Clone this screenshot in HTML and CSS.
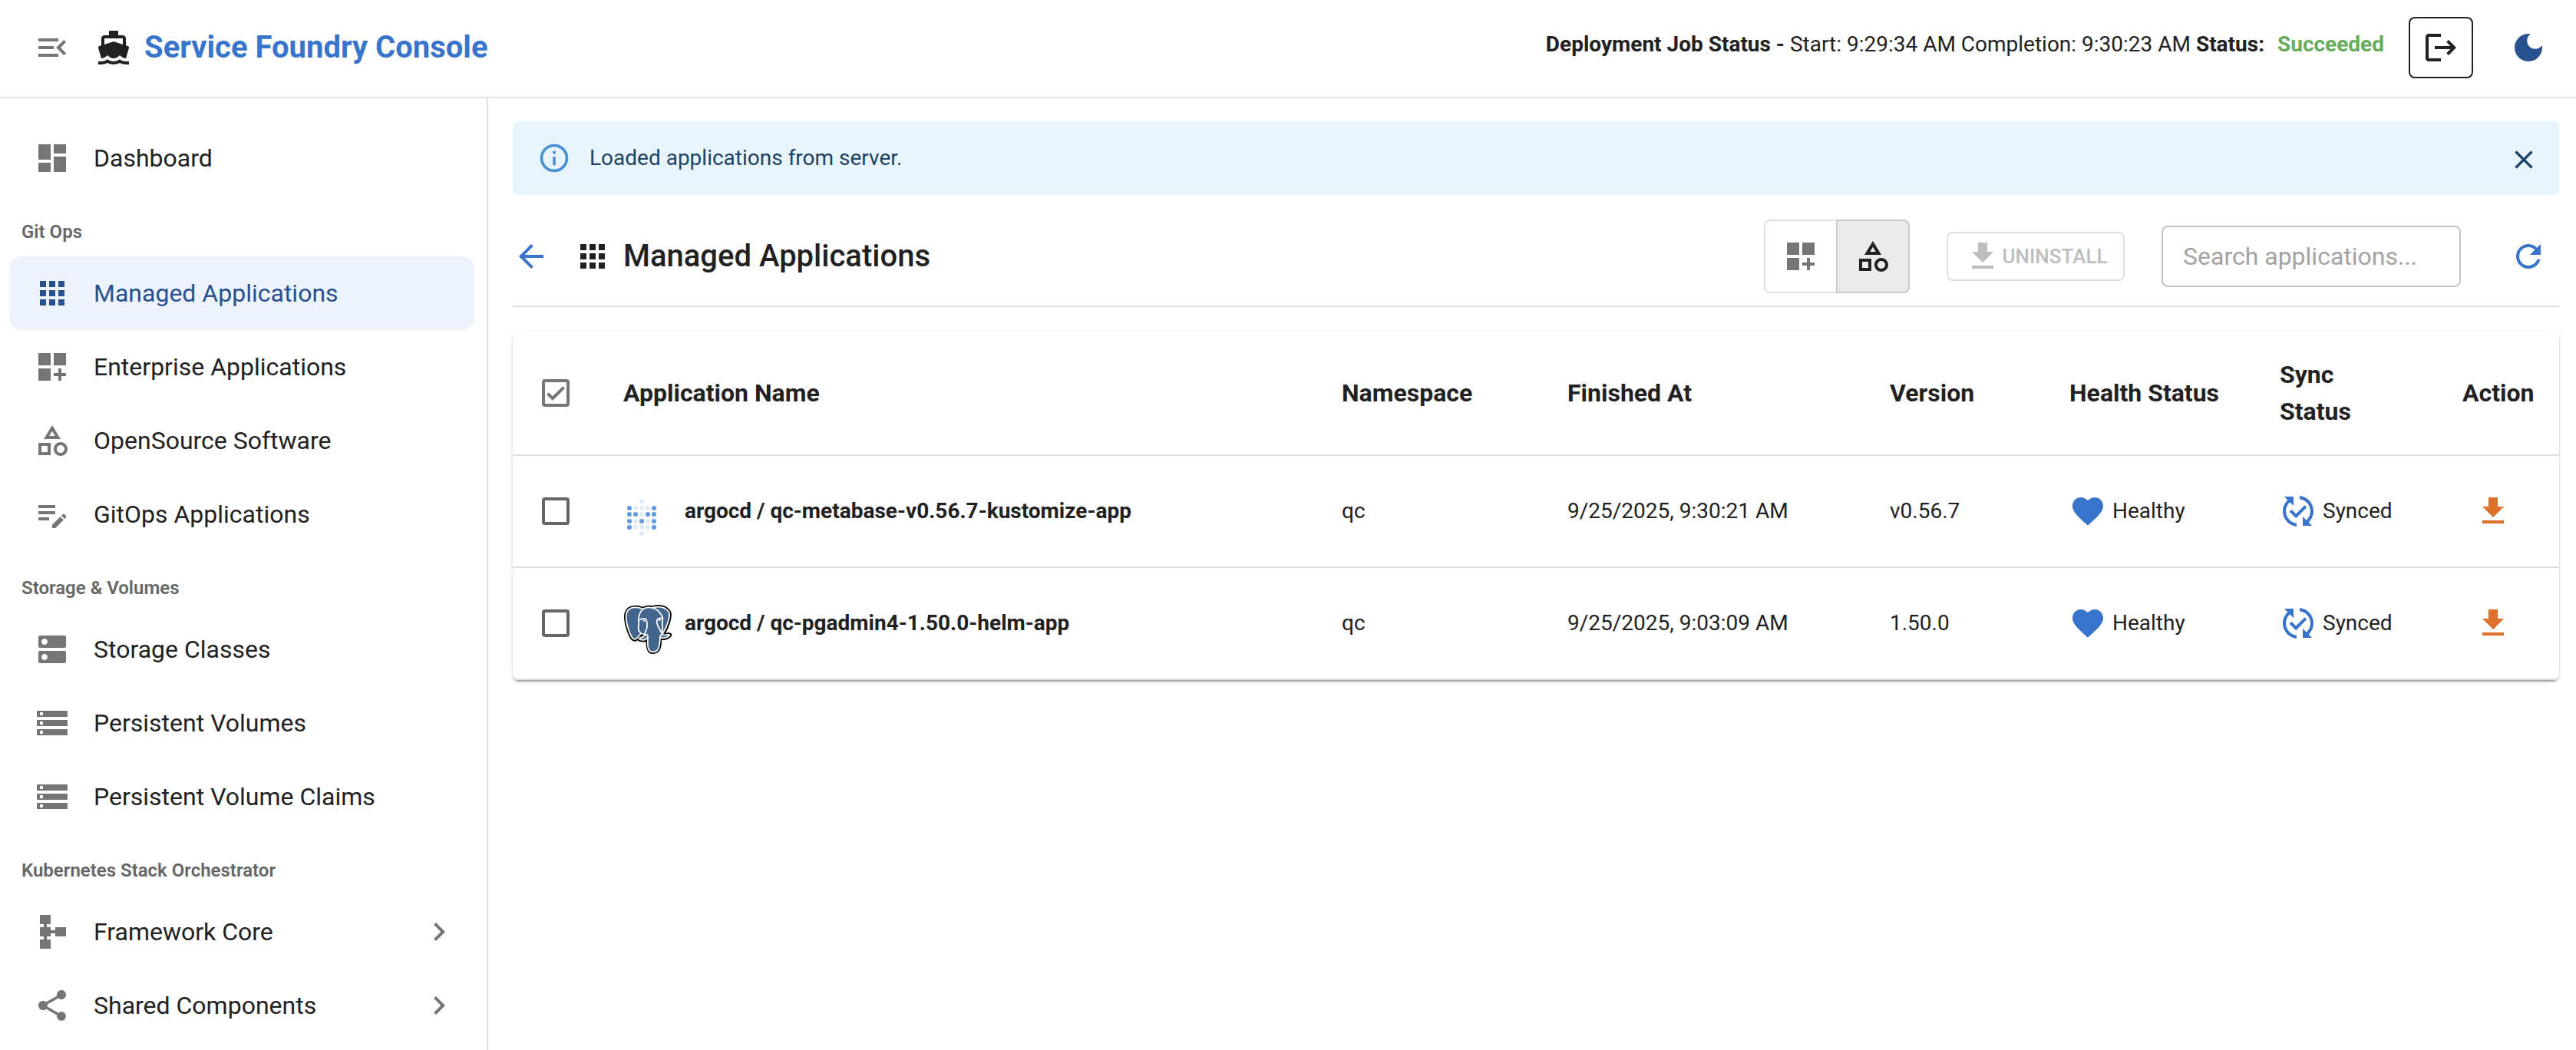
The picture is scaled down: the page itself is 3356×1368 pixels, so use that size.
FILE: index.html
```html
<!DOCTYPE html>
<html lang="en">
<head>
<meta charset="utf-8">
<title>Service Foundry Console</title>
<link rel="stylesheet" href="styles.css">
</head>
<body>
<svg class="sprite" aria-hidden="true">
  <symbol id="menu-open" viewBox="0 0 24 24"><path d="M3 18h13v-2H3v2zm0-5h10v-2H3v2zm0-7v2h13V6H3zm18 9.59L17.42 12 21 8.41 19.59 7l-5 5 5 5L21 15.59z"/></symbol>
  <symbol id="boat" viewBox="0 0 24 24"><path d="M20 21c-1.39 0-2.78-.47-4-1.32-2.44 1.71-5.56 1.71-8 0C6.78 20.53 5.39 21 4 21H2v2h2c1.38 0 2.74-.35 4-.99 2.52 1.29 5.48 1.29 8 0 1.26.65 2.62.99 4 .99h2v-2h-2zM3.95 19H4c1.6 0 3.02-.88 4-2 .98 1.12 2.4 2 4 2s3.02-.88 4-2c.98 1.12 2.4 2 4 2h.05l1.89-6.68c.08-.26.06-.54-.06-.78s-.34-.42-.6-.5L20 10.62V6c0-1.1-.9-2-2-2h-3V1H9v3H6c-1.1 0-2 .9-2 2v4.62l-1.29.42c-.26.08-.48.26-.6.5s-.15.52-.06.78L3.95 19zM6 6h12v3.97L12 8 6 9.97V6z"/></symbol>
  <symbol id="logout" viewBox="0 0 24 24"><path d="m17 7-1.41 1.41L18.17 11H8v2h10.17l-2.58 2.58L17 17l5-5zM4 5h8V3H4c-1.1 0-2 .9-2 2v14c0 1.1.9 2 2 2h8v-2H4V5z"/></symbol>
  <symbol id="moon" viewBox="0 0 24 24"><path d="M12 3c-4.97 0-9 4.03-9 9s4.03 9 9 9 9-4.03 9-9c0-.46-.04-.92-.1-1.36-.98 1.37-2.58 2.26-4.4 2.26-2.98 0-5.4-2.42-5.4-5.4 0-1.81.89-3.42 2.26-4.4-.44-.06-.9-.1-1.36-.1z"/></symbol>
  <symbol id="dashboard" viewBox="0 0 24 24"><path d="M3 13h8V3H3v10zm0 8h8v-6H3v6zm10 0h8V11h-8v10zm0-18v6h8V3h-8z"/></symbol>
  <symbol id="apps" viewBox="0 0 24 24"><path d="M4 8h4V4H4v4zm6 12h4v-4h-4v4zm-6 0h4v-4H4v4zm0-6h4v-4H4v4zm6 0h4v-4h-4v4zm6-10v4h4V4h-4zm-6 4h4V4h-4v4zm6 6h4v-4h-4v4zm0 6h4v-4h-4v4z"/></symbol>
  <symbol id="customize" viewBox="0 0 24 24"><path d="M3 3h8v8H3zm10 0h8v8h-8zM3 13h8v8H3zm15 0h-2v3h-3v2h3v3h2v-3h3v-2h-3z"/></symbol>
  <symbol id="category" viewBox="0 0 24 24"><path d="m12 2-5.5 9h11L12 2zm0 3.84L13.93 9h-3.87L12 5.84zM17.5 13c-2.49 0-4.5 2.01-4.5 4.5s2.01 4.5 4.5 4.5 4.5-2.01 4.5-4.5-2.01-4.5-4.5-4.5zm0 7c-1.38 0-2.5-1.12-2.5-2.5s1.12-2.5 2.5-2.5 2.5 1.12 2.5 2.5-1.12 2.5-2.5 2.5zM3 21.5h8v-8H3v8zm2-6h4v4H5v-4z"/></symbol>
  <symbol id="edit-note" viewBox="0 0 24 24"><path d="M3 10h11v2H3v-2zm0-2h11V6H3v2zm0 8h7v-2H3v2zm15.01-3.13.71-.71c.39-.39 1.02-.39 1.41 0l.71.71c.39.39.39 1.02 0 1.41l-.71.71-2.12-2.12zm-.71.71-5.3 5.3V21h2.12l5.3-5.3-2.12-2.12z"/></symbol>
  <symbol id="dns" viewBox="0 0 24 24"><path d="M20 13H4c-.55 0-1 .45-1 1v6c0 .55.45 1 1 1h16c.55 0 1-.45 1-1v-6c0-.55-.45-1-1-1zM7 19c-1.1 0-2-.9-2-2s.9-2 2-2 2 .9 2 2-.9 2-2 2zM20 3H4c-.55 0-1 .45-1 1v6c0 .55.45 1 1 1h16c.55 0 1-.45 1-1V4c0-.55-.45-1-1-1zM7 9c-1.1 0-2-.9-2-2s.9-2 2-2 2 .9 2 2-.9 2-2 2z"/></symbol>
  <symbol id="storage" viewBox="0 0 24 24"><path d="M2 20h20v-4H2v4zm2-3h2v2H4v-2zM2 4v4h20V4H2zm4 3H4V5h2v2zm-4 7h20v-4H2v4zm2-3h2v2H4v-2z"/></symbol>
  <symbol id="schema" viewBox="0 0 24 24"><path d="M14 9v2h-3V9H8.5V7H11V1H4v6h2.5v2H4v6h2.5v2H4v6h7v-6H8.5v-2H11v-2h3v2h7V9h-7z"/></symbol>
  <symbol id="share" viewBox="0 0 24 24"><path d="M18 16.08c-.76 0-1.44.3-1.96.77L8.91 12.7c.05-.23.09-.46.09-.7s-.04-.47-.09-.7l7.05-4.11c.54.5 1.25.81 2.04.81 1.66 0 3-1.34 3-3s-1.34-3-3-3-3 1.34-3 3c0 .24.04.47.09.7L8.04 9.81C7.5 9.31 6.79 9 6 9c-1.66 0-3 1.34-3 3s1.34 3 3 3c.79 0 1.5-.31 2.04-.81l7.12 4.16c-.05.21-.08.43-.08.65 0 1.61 1.31 2.92 2.92 2.92s2.92-1.31 2.92-2.92-1.31-2.92-2.92-2.92z"/></symbol>
  <symbol id="chevron" viewBox="0 0 24 24"><path d="M10 6 8.59 7.41 13.17 12l-4.58 4.59L10 18l6-6z"/></symbol>
  <symbol id="info" viewBox="0 0 24 24"><path d="M11 9h2V7h-2M12 20c-4.41 0-8-3.59-8-8s3.59-8 8-8 8 3.59 8 8-3.59 8-8 8m0-18A10 10 0 0 0 2 12a10 10 0 0 0 10 10 10 10 0 0 0 10-10A10 10 0 0 0 12 2m-1 15h2v-6h-2v6z"/></symbol>
  <symbol id="close" viewBox="0 0 24 24"><path d="M19 6.41 17.59 5 12 10.59 6.41 5 5 6.41 10.59 12 5 17.59 6.41 19 12 13.41 17.59 19 19 17.59 13.41 12z"/></symbol>
  <symbol id="back" viewBox="0 0 24 24"><path d="M20 11H7.83l5.59-5.59L12 4l-8 8 8 8 1.41-1.41L7.83 13H20v-2z"/></symbol>
  <symbol id="download" viewBox="0 0 24 24"><path d="M19 9h-4V3H9v6H5l7 7 7-7zM5 18v2h14v-2H5z"/></symbol>
  <symbol id="refresh" viewBox="0 0 24 24"><path d="M17.65 6.35C16.2 4.9 14.21 4 12 4c-4.42 0-7.99 3.58-7.99 8s3.57 8 7.99 8c3.73 0 6.84-2.55 7.73-6h-2.08c-.82 2.33-3.04 4-5.65 4-3.31 0-6-2.69-6-6s2.69-6 6-6c1.66 0 3.14.69 4.22 1.78L13 11h7V4l-2.35 2.35z"/></symbol>
  <symbol id="heart" viewBox="0 0 24 24"><path d="m12 21.35-1.45-1.32C5.4 15.36 2 12.28 2 8.5 2 5.42 4.42 3 7.5 3c1.74 0 3.41.81 4.5 2.09C13.09 3.81 14.76 3 16.5 3 19.58 3 22 5.42 22 8.5c0 3.78-3.4 6.86-8.55 11.54L12 21.35z"/></symbol>
  <symbol id="synced" viewBox="0 0 24 24"><path d="m17.66 9.53-7.07 7.07-4.24-4.24 1.41-1.41 2.83 2.83 5.66-5.66 1.41 1.41zM4 12c0-2.33 1.02-4.42 2.62-5.88L9 8.5v-6H3l2.2 2.2C3.24 6.52 2 9.11 2 12c0 5.19 3.95 9.45 9 9.95v-2.02c-3.94-.49-7-3.86-7-7.93zm18 0c0-5.19-3.95-9.45-9-9.95v2.02c3.94.49 7 3.86 7 7.93 0 2.33-1.02 4.42-2.62 5.88L15 15.5v6h6l-2.2-2.2c1.96-1.82 3.2-4.41 3.2-7.3z"/></symbol>
</svg>

<header class="topbar">
  <button class="icon-button menu-button" type="button" aria-label="Collapse menu"><svg class="icon"><use href="#menu-open"/></svg></button>
  <a class="brand" href="#"><svg class="icon brand-icon"><use href="#boat"/></svg>Service Foundry Console</a>
  <p class="job-status"><strong>Deployment Job Status - </strong>Start: 9:29:34 AM Completion: 9:30:23 AM <strong>Status: </strong><strong class="job-result">Succeeded</strong></p>
  <button class="logout-button" type="button" aria-label="Log out"><svg class="icon"><use href="#logout"/></svg></button>
  <button class="icon-button theme-button" type="button" aria-label="Dark mode"><svg class="icon"><use href="#moon"/></svg></button>
</header>

<div class="layout">
  <nav class="sidebar" aria-label="Main">
    <a class="nav-item" href="#"><svg class="icon"><use href="#dashboard"/></svg><span class="nav-text">Dashboard</span></a>
    <h2 class="nav-heading">Git Ops</h2>
    <a class="nav-item active" href="#" aria-current="page"><svg class="icon"><use href="#apps"/></svg><span class="nav-text">Managed Applications</span></a>
    <a class="nav-item" href="#"><svg class="icon"><use href="#customize"/></svg><span class="nav-text">Enterprise Applications</span></a>
    <a class="nav-item" href="#"><svg class="icon"><use href="#category"/></svg><span class="nav-text">OpenSource Software</span></a>
    <a class="nav-item" href="#"><svg class="icon"><use href="#edit-note"/></svg><span class="nav-text">GitOps Applications</span></a>
    <h2 class="nav-heading">Storage &amp; Volumes</h2>
    <a class="nav-item" href="#"><svg class="icon"><use href="#dns"/></svg><span class="nav-text">Storage Classes</span></a>
    <a class="nav-item" href="#"><svg class="icon"><use href="#storage"/></svg><span class="nav-text">Persistent Volumes</span></a>
    <a class="nav-item" href="#"><svg class="icon"><use href="#storage"/></svg><span class="nav-text">Persistent Volume Claims</span></a>
    <h2 class="nav-heading">Kubernetes Stack Orchestrator</h2>
    <a class="nav-item" href="#"><svg class="icon"><use href="#schema"/></svg><span class="nav-text">Framework Core</span><svg class="icon"><use href="#chevron"/></svg></a>
    <a class="nav-item" href="#"><svg class="icon"><use href="#share"/></svg><span class="nav-text">Shared Components</span><svg class="icon"><use href="#chevron"/></svg></a>
  </nav>

  <main class="content">
    <div class="alert" role="status">
      <svg class="icon alert-icon"><use href="#info"/></svg>
      <p class="alert-text">Loaded applications from server.</p>
      <button class="alert-close" type="button" aria-label="Close"><svg class="icon close-icon"><use href="#close"/></svg></button>
    </div>

    <div class="toolbar">
      <a class="back-link" href="#" aria-label="Back"><svg class="icon"><use href="#back"/></svg></a>
      <svg class="icon"><use href="#apps"/></svg>
      <h1 class="page-title">Managed Applications</h1>
      <div class="toolbar-actions">
        <div class="toggle-group" role="group" aria-label="Application type">
          <button class="toggle" type="button" aria-pressed="false" aria-label="Enterprise"><svg class="icon"><use href="#customize"/></svg></button>
          <button class="toggle selected" type="button" aria-pressed="true" aria-label="Open source"><svg class="icon"><use href="#category"/></svg></button>
        </div>
        <button class="uninstall-button" type="button" disabled><svg class="icon"><use href="#download"/></svg>UNINSTALL</button>
        <input class="search" type="text" placeholder="Search applications..." aria-label="Search applications">
        <button class="icon-button refresh-button" type="button" aria-label="Refresh"><svg class="icon"><use href="#refresh"/></svg></button>
      </div>
    </div>

    <div class="card">
      <table class="apps-table">
        <colgroup>
          <col class="col-check"><col><col class="col-namespace"><col class="col-finished"><col class="col-version"><col class="col-health"><col class="col-sync"><col class="col-action">
        </colgroup>
        <thead>
          <tr>
            <th class="check-cell"><input class="checkbox check-all" type="checkbox" checked aria-label="Select all"></th>
            <th scope="col">Application Name</th>
            <th scope="col">Namespace</th>
            <th scope="col">Finished At</th>
            <th scope="col">Version</th>
            <th scope="col">Health Status</th>
            <th scope="col">Sync<br>Status</th>
            <th scope="col">Action</th>
          </tr>
        </thead>
        <tbody>
          <tr>
            <td class="check-cell"><input class="checkbox" type="checkbox" aria-label="Select qc-metabase"></td>
            <td>
              <div class="app-name">
                <svg class="app-logo" viewBox="0 0 64 64" aria-hidden="true">
                  <g fill="#e0ebf9"><circle cx="24" cy="11" r="3"/><circle cx="16" cy="20" r="3"/><circle cx="24" cy="20" r="3"/><circle cx="32" cy="20" r="3"/><circle cx="24" cy="28" r="3"/><circle cx="16" cy="37" r="3"/><circle cx="32" cy="37" r="3"/><circle cx="16" cy="45" r="3"/><circle cx="24" cy="45" r="3"/><circle cx="32" cy="45" r="3"/><circle cx="24" cy="53" r="3"/></g>
                  <g fill="#629ae0"><circle cx="8" cy="20" r="3"/><circle cx="40" cy="20" r="3"/><circle cx="8" cy="28" r="3"/><circle cx="16" cy="28" r="3"/><circle cx="32" cy="28" r="3"/><circle cx="40" cy="28" r="3"/><circle cx="8" cy="37" r="3"/><circle cx="24" cy="37" r="3"/><circle cx="40" cy="37" r="3"/><circle cx="8" cy="45" r="3"/><circle cx="40" cy="45" r="3"/></g>
                </svg>
                <strong>argocd / qc-metabase-v0.56.7-kustomize-app</strong>
              </div>
            </td>
            <td>qc</td>
            <td>9/25/2025, 9:30:21 AM</td>
            <td>v0.56.7</td>
            <td><span class="state"><svg class="icon"><use href="#heart"/></svg>Healthy</span></td>
            <td><span class="state"><svg class="icon"><use href="#synced"/></svg>Synced</span></td>
            <td><button class="icon-button row-action" type="button" aria-label="Uninstall qc-metabase"><svg class="icon"><use href="#download"/></svg></button></td>
          </tr>
          <tr>
            <td class="check-cell"><input class="checkbox" type="checkbox" aria-label="Select qc-pgadmin4"></td>
            <td>
              <div class="app-name">
                <svg class="app-logo" viewBox="0 0 432.071 445.383" aria-hidden="true">
                  <path fill="#000" stroke="#000" stroke-width="37.4" d="M323.205,324.227c2.833-23.601,1.984-27.062,19.563-23.239l4.463,0.392c13.517,0.615,31.199-2.174,41.587-7c22.362-10.376,35.622-27.7,13.572-23.148c-50.297,10.376-53.755-6.655-53.755-6.655c53.111-78.803,75.313-178.836,56.149-203.322C352.514-5.534,262.036,26.049,260.522,26.869l-0.482,0.089c-9.938-2.062-21.06-3.294-33.554-3.496c-22.761-0.374-40.032,5.967-53.133,15.904c0,0-161.408-66.498-153.899,83.628c1.597,31.936,45.777,241.655,98.47,178.31c19.259-23.163,37.871-42.748,37.871-42.748c9.242,6.14,20.307,9.272,31.912,8.147l0.897-0.765c-0.281,2.876-0.157,5.689,0.359,9.019c-13.572,15.167-9.584,17.83-36.723,23.416c-27.457,5.659-11.326,15.734-0.797,18.367c12.768,3.193,42.305,7.716,62.268-20.224l-0.795,3.188c5.325,4.26,4.965,30.619,5.72,49.452c0.756,18.834,2.017,36.409,5.856,46.771c3.839,10.36,8.369,37.05,44.036,29.406c29.809-6.388,52.6-15.582,54.677-101.107"/>
                  <path fill="#41658c" d="M402.395,271.23c-50.302,10.376-53.76-6.655-53.76-6.655c53.111-78.808,75.313-178.843,56.153-203.326c-52.27-66.785-142.752-35.2-144.262-34.38l-0.486,0.087c-9.938-2.063-21.06-3.292-33.56-3.496c-22.761-0.373-40.026,5.967-53.127,15.902c0,0-161.411-66.495-153.904,83.63c1.597,31.938,45.776,241.657,98.471,178.312c19.26-23.163,37.869-42.748,37.869-42.748c9.243,6.14,20.308,9.272,31.908,8.147l0.901-0.765c-0.28,2.876-0.152,5.689,0.361,9.019c-13.575,15.167-9.586,17.83-36.723,23.416c-27.459,5.659-11.328,15.734-0.796,18.367c12.768,3.193,42.307,7.716,62.266-20.224l-0.796,3.188c5.319,4.26,9.054,27.711,8.428,48.969c-0.626,21.259-1.044,35.854,3.147,47.254c4.191,11.4,8.368,37.05,44.042,29.406c29.809-6.388,45.256-22.942,47.405-50.555c1.525-19.631,4.976-16.729,5.194-34.28l2.768-8.309c3.192-26.611,0.507-35.196,18.872-31.203l4.463,0.392c13.517,0.615,31.208-2.174,41.591-7c22.358-10.376,35.618-27.7,13.573-23.148z"/>
                  <g fill="none" stroke="#fff" stroke-width="12.465" stroke-linecap="round" stroke-linejoin="round">
                    <path d="M215.866,286.484c-1.385,49.516,0.348,99.377,5.193,111.495c4.848,12.118,15.223,35.688,50.9,28.045c29.806-6.39,40.651-18.756,45.357-46.051c3.466-20.082,10.148-75.854,11.005-87.281"/>
                    <path d="M173.104,38.256c0,0-161.521-66.016-154.012,84.109c1.597,31.938,45.779,241.664,98.473,178.316c19.256-23.166,36.671-41.335,36.671-41.335"/>
                    <path d="M260.349,26.207c-5.591,1.753,89.848-34.889,144.087,34.417c19.159,24.484-3.043,124.519-56.153,203.329"/>
                    <path d="M348.282,263.953c0,0,3.461,17.036,53.764,6.653c22.04-4.552,8.776,12.774-13.577,23.155c-18.345,8.514-59.474,10.696-60.146-1.069c-1.729-30.355,21.647-21.133,19.96-28.739c-1.525-6.85-11.979-13.573-18.894-30.338c-6.037-14.633-82.796-126.849,21.287-110.183c3.813-0.789-27.146-99.002-124.553-100.599c-97.385-1.597-94.19,119.762-94.19,119.762"/>
                    <path d="M188.604,274.334c-13.577,15.166-9.584,17.829-36.723,23.417c-27.459,5.66-11.326,15.733-0.797,18.365c12.768,3.195,42.307,7.718,62.266-20.229c6.078-8.509-0.036-22.086-8.385-25.547c-4.034-1.671-9.428-3.765-16.361,3.994z"/>
                    <path d="M187.715,274.069c-1.368-8.917,2.93-19.528,7.536-31.942c6.922-18.626,22.893-37.255,10.117-96.339c-9.523-44.029-73.396-9.163-73.436-3.193c-0.039,5.968,2.889,30.26-1.067,58.548c-5.162,36.913,23.488,68.132,56.479,64.938"/>
                    <path d="M350.676,123.432c0.863,15.994-3.445,26.888-3.988,43.914c-0.804,24.748,11.799,53.074-7.191,81.435"/>
                  </g>
                  <g fill="#fff" stroke="#fff" stroke-width="4">
                    <path d="M172.517,141.7c-0.288,2.039,3.733,7.48,8.976,8.207c5.234,0.73,9.714-3.522,9.998-5.559c0.284-2.039-3.732-4.285-8.977-5.015c-5.237-0.731-9.719,0.333-9.996,2.367z"/>
                    <path d="M331.941,137.543c0.284,2.039-3.732,7.48-8.976,8.207c-5.238,0.73-9.718-3.522-10.005-5.559c-0.277-2.039,3.74-4.285,8.979-5.015c5.239-0.73,9.718,0.333,10.002,2.368z"/>
                  </g>
                </svg>
                <strong>argocd / qc-pgadmin4-1.50.0-helm-app</strong>
              </div>
            </td>
            <td>qc</td>
            <td>9/25/2025, 9:03:09 AM</td>
            <td>1.50.0</td>
            <td><span class="state"><svg class="icon"><use href="#heart"/></svg>Healthy</span></td>
            <td><span class="state"><svg class="icon"><use href="#synced"/></svg>Synced</span></td>
            <td><button class="icon-button row-action" type="button" aria-label="Uninstall qc-pgadmin4"><svg class="icon"><use href="#download"/></svg></button></td>
          </tr>
        </tbody>
      </table>
    </div>
  </main>
</div>
</body>
</html>
```
FILE: styles.css
```css
:root {
  --primary: #3874cb;
  --primary-dark: #27518f;
  --text: #212121;
  --muted: #666;
  --icon: #757575;
  --divider: #e0e0e0;
}

* {
  box-sizing: border-box;
}

body {
  margin: 0;
  min-height: 100vh;
  display: flex;
  flex-direction: column;
  background: #fff;
  color: var(--text);
  font-family: Roboto, "Liberation Sans", sans-serif;
  font-size: 28px;
  line-height: 40px;
}

h1,
h2,
p {
  margin: 0;
}

a {
  color: inherit;
  text-decoration: none;
}

button {
  padding: 0;
  border: 0;
  background: none;
  color: inherit;
  font: inherit;
}

.sprite {
  position: absolute;
  width: 0;
  height: 0;
}

.icon {
  flex: none;
  display: block;
  width: 48px;
  height: 48px;
  fill: currentColor;
}

.icon-button {
  flex: none;
  display: flex;
  align-items: center;
  justify-content: center;
  width: 80px;
  height: 80px;
}

/* Top bar */

.topbar {
  display: flex;
  align-items: center;
  padding: 22px 22px 24px 28px;
  border-bottom: 2px solid var(--divider);
}

.menu-button {
  color: var(--icon);
}

.brand {
  display: flex;
  align-items: center;
  gap: 16px;
  margin-left: 16px;
  color: var(--primary);
  font-size: 40px;
  font-weight: 700;
  line-height: 64px;
}

.brand-icon {
  color: var(--text);
}

.job-status {
  margin: 0 32px 8px auto;
}

.job-result {
  margin-left: 10px;
  color: #66ad5b;
}

.logout-button {
  display: flex;
  align-items: center;
  justify-content: center;
  width: 84px;
  height: 80px;
  margin-right: 32px;
  border: 2px solid var(--text);
  border-radius: 8px;
}

.theme-button {
  color: var(--primary-dark);
}

/* Sidebar */

.layout {
  flex: 1;
  display: flex;
}

.sidebar {
  flex: 0 0 636px;
  padding: 30px 16px 8px 12px;
  border-right: 2px solid var(--divider);
}

.nav-item {
  display: flex;
  align-items: center;
  gap: 30px;
  height: 96px;
  padding: 0 22px 0 32px;
  border-radius: 16px;
  font-size: 32px;
  line-height: 48px;
}

.nav-item .icon {
  color: var(--icon);
}

.nav-text {
  flex: 1;
}

.nav-item.active,
.nav-item.active .icon {
  color: var(--primary-dark);
}

.nav-item.active {
  background: #eef3fb;
}

.nav-heading {
  padding: 24px 16px 8px;
  color: var(--muted);
  font-size: 24px;
  font-weight: 600;
  line-height: 48px;
}

/* Content */

.content {
  flex: 1;
  min-width: 0;
  padding: 30px 22px 30px 32px;
}

.alert {
  display: flex;
  align-items: center;
  gap: 24px;
  height: 96px;
  margin-bottom: 32px;
  padding: 0 16px 0 32px;
  border-radius: 8px;
  background: #e7f4fb;
  color: #1d4363;
}

.alert-icon {
  width: 44px;
  height: 44px;
  color: #4a90d5;
}

.alert-text {
  flex: 1;
}

.alert-close {
  margin-top: 4px;
  padding: 10px;
}

.close-icon {
  width: 40px;
  height: 40px;
}

.toolbar {
  display: flex;
  align-items: center;
  padding-bottom: 16px;
  border-bottom: 2px solid var(--divider);
}

.back-link {
  margin-right: 32px;
  color: var(--primary);
}

.page-title {
  margin-left: 16px;
  font-size: 40px;
  font-weight: 500;
  line-height: 64px;
}

.toolbar-actions {
  display: flex;
  align-items: center;
  gap: 48px;
  margin-left: auto;
}

.toggle-group {
  display: flex;
}

.toggle {
  display: flex;
  align-items: center;
  justify-content: center;
  width: 96px;
  height: 96px;
  border: 2px solid var(--divider);
  border-radius: 8px 0 0 8px;
  color: var(--icon);
}

.toggle.selected {
  margin-left: -2px;
  border-color: #cacaca;
  border-radius: 0 8px 8px 0;
  background: #ebebeb;
  color: var(--text);
}

.uninstall-button {
  display: flex;
  align-items: center;
  justify-content: center;
  gap: 2px;
  min-width: 232px;
  height: 64px;
  padding: 0 18px;
  border: 2px solid var(--divider);
  border-radius: 8px;
  color: #bdbdbd;
  font-size: 26px;
  font-weight: 500;
}

.search {
  width: 390px;
  height: 80px;
  padding: 0 26px;
  border: 2px solid #c4c4c4;
  border-radius: 8px;
  background: none;
  color: inherit;
  font: inherit;
  font-size: 32px;
}

.search::placeholder {
  color: #a3a3a3;
  opacity: 1;
}

.refresh-button {
  color: var(--primary);
}

/* Table */

.card {
  margin-top: 32px;
  border-radius: 8px;
  background: #fff;
  box-shadow: 0 4px 2px -2px rgba(0, 0, 0, 0.2), 0 2px 2px 0 rgba(0, 0, 0, 0.14), 0 2px 6px 0 rgba(0, 0, 0, 0.12);
}

.apps-table {
  width: 100%;
  table-layout: fixed;
  border-collapse: separate;
  border-spacing: 0;
}

.col-check { width: 112px; }
.col-namespace { width: 294px; }
.col-finished { width: 420px; }
.col-version { width: 234px; }
.col-health { width: 274px; }
.col-sync { width: 238px; }
.col-action { width: 158px; }

.apps-table th,
.apps-table td {
  padding: 32px;
  border-bottom: 2px solid var(--divider);
  text-align: left;
  vertical-align: middle;
}

.apps-table th {
  font-size: 32px;
  font-weight: 700;
  line-height: 48px;
}

.apps-table .check-cell {
  padding: 0;
  text-align: center;
}

.checkbox {
  appearance: none;
  display: block;
  width: 36px;
  height: 36px;
  margin: 0 auto;
  border: 4px solid var(--muted);
  border-radius: 4px;
}

.check-all {
  border-color: var(--icon);
  background: url("data:image/svg+xml,%3Csvg xmlns='http://www.w3.org/2000/svg' viewBox='3 3 18 18'%3E%3Cpath fill='%23757575' d='M17.99 9l-1.41-1.42-6.59 6.59-2.58-2.57-1.42 1.41 4 3.99z'/%3E%3C/svg%3E") border-box;
}

.app-name {
  display: flex;
  align-items: center;
  gap: 16px;
  height: 80px;
}

.app-logo {
  flex: none;
  align-self: flex-end;
  width: 64px;
  height: 64px;
}

.state {
  display: flex;
  align-items: center;
  gap: 8px;
}

.state .icon {
  color: var(--primary);
}

.row-action {
  color: #dd722c;
}
```
